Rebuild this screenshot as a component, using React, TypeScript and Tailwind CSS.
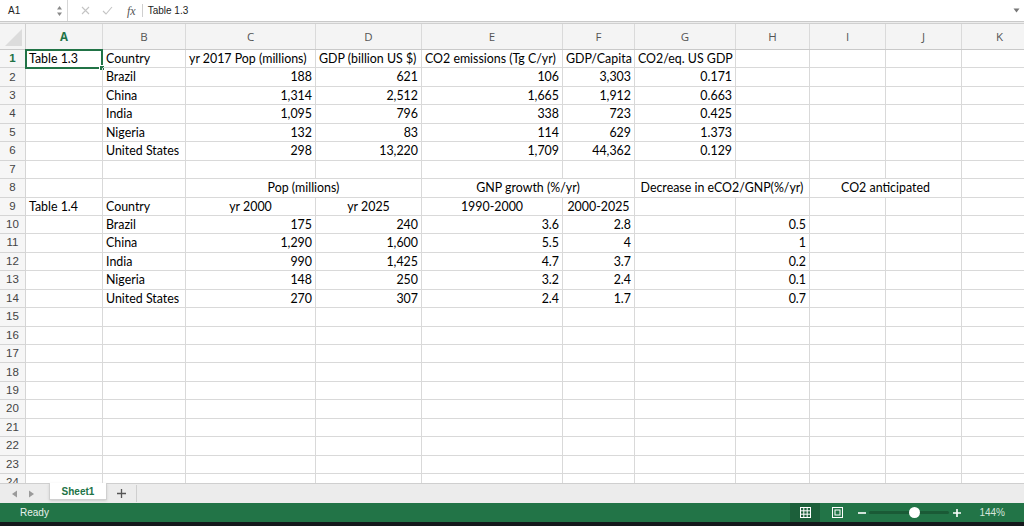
import React from "react";

type Cell = { t: string; a?: "l" | "r" | "c"; span?: number };
type Entry = string | Cell | null;

const widths = [77, 83, 130, 106, 141, 72, 101, 74, 76, 76, 76];
const letters = ["A", "B", "C", "D", "E", "F", "G", "H", "I", "J", "K"];

const r = (t: string): Cell => ({ t, a: "r" });
const c = (t: string, span = 1): Cell => ({ t, a: "c", span });

const rows: Entry[][] = [
  ["Table 1.3", "Country", "yr 2017 Pop (millions)", "GDP (billion US $)", "CO2 emissions (Tg C/yr)", "GDP/Capita", "CO2/eq. US GDP"],
  [null, "Brazil", r("188"), r("621"), r("106"), r("3,303"), r("0.171")],
  [null, "China", r("1,314"), r("2,512"), r("1,665"), r("1,912"), r("0.663")],
  [null, "India", r("1,095"), r("796"), r("338"), r("723"), r("0.425")],
  [null, "Nigeria", r("132"), r("83"), r("114"), r("629"), r("1.373")],
  [null, "United States", r("298"), r("13,220"), r("1,709"), r("44,362"), r("0.129")],
  [],
  [null, null, c("Pop (millions)", 2), c("GNP growth (%/yr)", 2), c("Decrease in eCO2/GNP(%/yr)", 2), c("CO2 anticipated", 2)],
  ["Table 1.4", "Country", c("yr 2000"), c("yr 2025"), c("1990-2000"), c("2000-2025")],
  [null, "Brazil", r("175"), r("240"), r("3.6"), r("2.8"), null, r("0.5")],
  [null, "China", r("1,290"), r("1,600"), r("5.5"), r("4"), null, r("1")],
  [null, "India", r("990"), r("1,425"), r("4.7"), r("3.7"), null, r("0.2")],
  [null, "Nigeria", r("148"), r("250"), r("3.2"), r("2.4"), null, r("0.1")],
  [null, "United States", r("270"), r("307"), r("2.4"), r("1.7"), null, r("0.7")],
];

function buildRow(entries: Entry[]) {
  const out: { w: number; t: string; a: string; key: number; first: boolean }[] = [];
  let i = 0;
  let p = 0;
  while (i < 11) {
    const e = entries[p];
    let t = "";
    let a = "l";
    let span = 1;
    if (typeof e === "string") t = e;
    else if (e) {
      t = e.t;
      a = e.a || "l";
      span = e.span || 1;
    }
    let w = 0;
    for (let k = i; k < i + span; k++) w += widths[k];
    out.push({ w, t, a, key: i, first: i === 0 });
    i += span;
    p += 1;
  }
  return out;
}

const cellFont = { fontFamily: "Lato, 'Open Sans', sans-serif" };

function GridRow({ idx }: { idx: number }) {
  const entries = rows[idx] || [];
  const cells = buildRow(entries);
  const selected = idx === 0;
  return (
    <div className="flex h-[18.45px] shrink-0">
      <div
        className={`w-[26px] shrink-0 border-r border-b border-[#d5d5d5] bg-[#f6f6f6] flex items-center justify-center text-[11.5px] ${
          selected ? "text-[#217346] font-bold" : "text-[#444]"
        }`}
        style={{ fontFamily: "'Liberation Sans', Arial, sans-serif" }}
      >
        {idx + 1}
      </div>
      {cells.map((cell) => (
        <div
          key={cell.key}
          className={`relative shrink-0 border-r border-b border-[#d9d9d9] flex items-center px-[3px] text-[12.4px] text-black whitespace-nowrap ${
            cell.a === "r" ? "justify-end" : cell.a === "c" ? "justify-center" : "justify-start"
          }`}
          style={{ width: cell.w, ...cellFont }}
        >
          <span className="leading-none pt-[1px]">{cell.t}</span>
          {selected && cell.first && (
            <div className="absolute -left-[1px] -top-[1px] w-[78px] h-[19.5px] border-2 border-[#217346]">
              <div className="absolute -right-[4px] -bottom-[4px] w-[6px] h-[6px] bg-[#217346] border border-white" />
            </div>
          )}
        </div>
      ))}
    </div>
  );
}

export default function App() {
  const rowCount = 24;
  return (
    <div className="w-[1024px] h-[526px] overflow-hidden bg-white flex flex-col select-none">
      {/* formula bar */}
      <div
        className="h-[22px] shrink-0 flex items-center border-b border-[#c9c9c9] bg-white text-[10px] text-[#222]"
        style={{ fontFamily: "'Liberation Sans', Arial, sans-serif" }}
      >
        <div className="w-[68px] h-full flex items-center justify-between pl-[8px] pr-[4px] border-r border-[#d6d6d6]">
          <span>A1</span>
          <svg width="7" height="12" viewBox="0 0 7 12">
            <path d="M3.5 1 L6 4.5 L1 4.5 Z" fill="#8a8a8a" />
            <path d="M3.5 11 L6 7.5 L1 7.5 Z" fill="#8a8a8a" />
          </svg>
        </div>
        <div className="flex items-center gap-[12px] pl-[13px]">
          <svg width="9" height="9" viewBox="0 0 9 9">
            <path d="M1 1 L8 8 M8 1 L1 8" stroke="#c4c4c4" strokeWidth="1.1" />
          </svg>
          <svg width="11" height="9" viewBox="0 0 11 9">
            <path d="M1 5 L4 8 L10 1" stroke="#c4c4c4" strokeWidth="1.1" fill="none" />
          </svg>
        </div>
        <span
          className="ml-[14px] text-[12px] italic text-[#555]"
          style={{ fontFamily: "'Liberation Serif', 'Times New Roman', serif" }}
        >
          fx
        </span>
        <div className="ml-[6px] w-px h-[13px] bg-[#cfcfcf]" />
        <span className="ml-[5px]">Table 1.3</span>
        <div className="flex-1" />
        <svg width="7" height="5" viewBox="0 0 7 5" className="mr-[4px]">
          <path d="M0.5 0.5 L6.5 0.5 L3.5 4.5 Z" fill="#777" />
        </svg>
      </div>
      <div className="h-[2px] shrink-0 bg-[#ececec] border-b border-[#d0d0d0]" />

      {/* grid */}
      <div className="flex-1 overflow-hidden flex flex-col">
        <div className="h-[26px] shrink-0 flex bg-[#f4f4f4] border-b border-[#c9c9c9]">
          <div className="w-[26px] shrink-0 border-r border-[#d0d0d0] relative">
            <svg width="20" height="20" viewBox="0 0 20 20" className="absolute right-[2px] bottom-[2px]">
              <path d="M19 2 L19 19 L2 19 Z" fill="#dcdcdc" />
            </svg>
          </div>
          {letters.map((l, i) => (
            <div
              key={l}
              className={`shrink-0 border-r border-[#dadada] flex items-center justify-center text-[11.5px] ${
                i === 0 ? "text-[#217346] font-bold" : "text-[#555]"
              }`}
              style={{ width: widths[i], fontFamily: "'Open Sans', 'Liberation Sans', sans-serif" }}
            >
              {l}
            </div>
          ))}
        </div>
        {Array.from({ length: rowCount }, (_, i) => (
          <GridRow key={i} idx={i} />
        ))}
      </div>

      {/* sheet tabs */}
      <div
        className="h-[20px] shrink-0 flex items-stretch bg-[#ececec] border-t border-[#cfcfcf]"
        style={{ fontFamily: "'Liberation Sans', Arial, sans-serif" }}
      >
        <div className="flex items-center gap-[10px] pl-[11px] w-[49px]">
          <svg width="7" height="8" viewBox="0 0 7 8">
            <path d="M6 0.5 L6 7.5 L1 4 Z" fill="#9a9a9a" />
          </svg>
          <svg width="7" height="8" viewBox="0 0 7 8">
            <path d="M1 0.5 L1 7.5 L6 4 Z" fill="#9a9a9a" />
          </svg>
        </div>
        <div className="w-[58px] -mt-px mb-[3px] bg-white border-x border-b border-[#d0d0d0] shadow-sm flex items-center justify-center text-[10px] font-bold text-[#217346]">
          Sheet1
        </div>
        <div className="w-[30px] flex items-center justify-center border-r border-[#cfcfcf] my-[1px]">
          <svg width="9" height="9" viewBox="0 0 9 9">
            <path d="M4.5 0 L4.5 9 M0 4.5 L9 4.5" stroke="#555" strokeWidth="1.3" />
          </svg>
        </div>
      </div>

      {/* status bar */}
      <div
        className="h-[19px] shrink-0 flex items-center bg-[#227447] text-[#e8f1ec] text-[10px]"
        style={{ fontFamily: "'Liberation Sans', Arial, sans-serif" }}
      >
        <span className="ml-[20px]">Ready</span>
        <div className="flex-1" />
        <div className="w-[30px] h-full bg-[#1c5f3a] flex items-center justify-center">
          <svg width="11" height="11" viewBox="0 0 11 11">
            <rect x="0.5" y="0.5" width="10" height="10" fill="none" stroke="#fff" strokeWidth="1" />
            <path d="M3.8 0.5 V10.5 M7.2 0.5 V10.5 M0.5 3.8 H10.5 M0.5 7.2 H10.5" stroke="#fff" strokeWidth="1" />
          </svg>
        </div>
        <div className="w-[30px] flex items-center justify-center ml-[2px]">
          <svg width="11" height="11" viewBox="0 0 11 11">
            <rect x="0.5" y="0.5" width="10" height="10" fill="none" stroke="#fff" strokeWidth="1" />
            <rect x="3" y="3" width="5" height="5" fill="none" stroke="#fff" strokeWidth="1" />
          </svg>
        </div>
        <svg width="8" height="8" viewBox="0 0 8 8" className="ml-[6px]">
          <path d="M0 4 H8" stroke="#fff" strokeWidth="1.6" />
        </svg>
        <div className="relative ml-[3px] w-[80px] h-[3px] bg-[#1a5a36] rounded">
          <div className="absolute left-[40px] -top-[4px] w-[11px] h-[11px] rounded-full bg-white" />
        </div>
        <svg width="8" height="8" viewBox="0 0 8 8" className="ml-[4px]">
          <path d="M0 4 H8 M4 0 V8" stroke="#fff" strokeWidth="1.6" />
        </svg>
        <span className="ml-[18px] mr-[19px] text-[#d6e6dc]">144%</span>
      </div>
      <div className="h-[4px] shrink-0 bg-[#15181c]" />
    </div>
  );
}
